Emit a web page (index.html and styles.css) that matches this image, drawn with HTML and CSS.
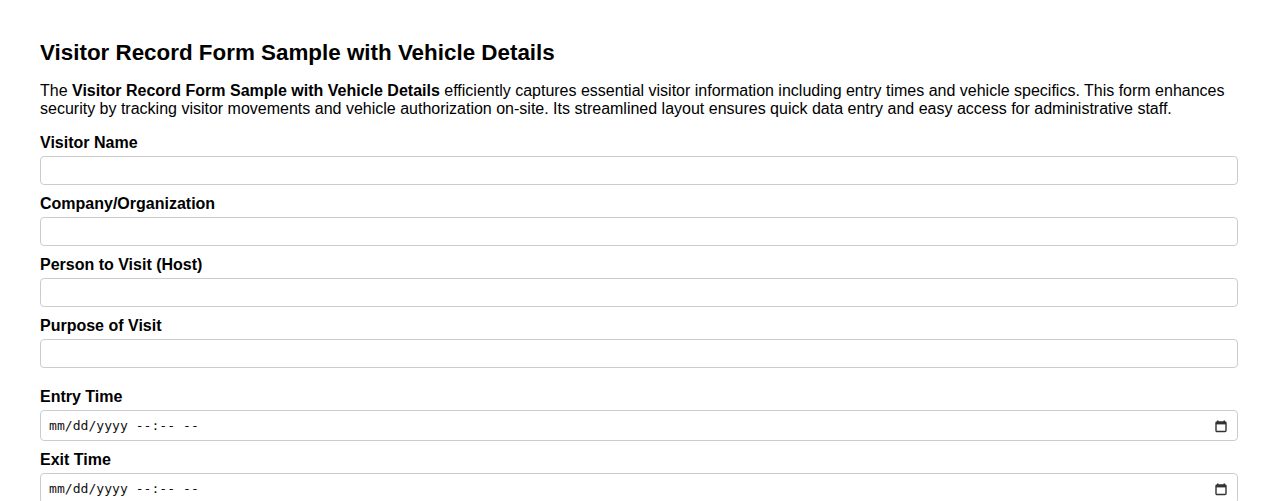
FILE: index.html
```html
<!DOCTYPE html>
<html>
<head>
<meta charset="utf-8">
<link rel="stylesheet" href="styles.css">
</head>
<body>
<div class="page">
  <h2 class="title">Visitor Record Form Sample with Vehicle Details</h2>
  <p class="intro">The <strong>Visitor Record Form Sample with Vehicle Details</strong> efficiently captures essential visitor information including entry times and vehicle specifics. This form enhances security by tracking visitor movements and vehicle authorization on-site. Its streamlined layout ensures quick data entry and easy access for administrative staff.</p>
  <form class="form">
    <div class="field">
      <label class="label">Visitor Name</label>
      <input class="input" type="text">
    </div>
    <div class="field">
      <label class="label">Company/Organization</label>
      <input class="input" type="text">
    </div>
    <div class="field">
      <label class="label">Person to Visit (Host)</label>
      <input class="input" type="text">
    </div>
    <div class="field field-wide">
      <label class="label">Purpose of Visit</label>
      <input class="input" type="text">
    </div>
    <div class="field">
      <label class="label">Entry Time</label>
      <div class="datebox">
        <span class="datetext">mm/dd/yyyy --:-- --</span>
        <svg class="calicon" width="14" height="14" viewBox="0 0 14 14"><path d="M3 1.5h1.5v2H3zM9.5 1.5H11v2H9.5z" fill="#333"/><rect x="2" y="3" width="10" height="9.5" rx="1" fill="none" stroke="#333" stroke-width="1.4"/><rect x="2" y="3" width="10" height="2.4" fill="#333"/></svg>
      </div>
    </div>
    <div class="field">
      <label class="label">Exit Time</label>
      <div class="datebox">
        <span class="datetext">mm/dd/yyyy --:-- --</span>
        <svg class="calicon" width="14" height="14" viewBox="0 0 14 14"><path d="M3 1.5h1.5v2H3zM9.5 1.5H11v2H9.5z" fill="#333"/><rect x="2" y="3" width="10" height="9.5" rx="1" fill="none" stroke="#333" stroke-width="1.4"/><rect x="2" y="3" width="10" height="2.4" fill="#333"/></svg>
      </div>
    </div>
  </form>
</div>
</body>
</html>
```

FILE: styles.css
```css
html, body {
  margin: 0;
  padding: 0;
  background: #fff;
}
body {
  font-family: "Liberation Sans", Arial, sans-serif;
  color: #000;
}
.page {
  padding: 40px 40px 0 40px;
}
.title {
  font-size: 22.4px;
  font-weight: bold;
  margin: 0 0 16px 0;
  line-height: 26px;
}
.intro {
  font-size: 16px;
  line-height: 18px;
  margin: 0 0 16px 0;
}
.form {
  display: flex;
  flex-direction: column;
}
.field {
  display: flex;
  flex-direction: column;
  margin-bottom: 10px;
}
.field-wide {
  margin-bottom: 20px;
}
.label {
  font-size: 16px;
  font-weight: bold;
  line-height: 18px;
  margin-bottom: 4px;
}
.input {
  box-sizing: border-box;
  width: 100%;
  height: 29px;
  padding: 6px 8px;
  border: 1px solid #ccc;
  border-radius: 4px;
  background: #fff;
  margin: 0;
}
.datebox {
  box-sizing: border-box;
  width: 100%;
  height: 31px;
  padding: 0 9px 0 8px;
  border: 1px solid #ccc;
  border-radius: 4px;
  background: #fff;
  display: flex;
  align-items: center;
  justify-content: space-between;
}
.datetext {
  font-family: "DejaVu Sans Mono", "Liberation Mono", monospace;
  font-size: 13.1px;
  color: #111;
  white-space: pre;
}
.calicon {
  display: block;
}
```
